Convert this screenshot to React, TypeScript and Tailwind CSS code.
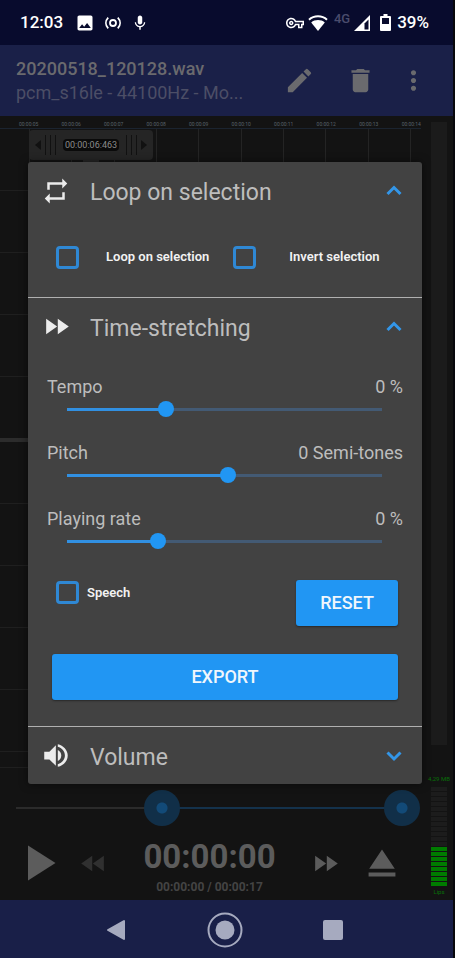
import { useState } from 'react';
import type { ReactNode } from 'react';
import {
  MdDelete,
  MdEdit,
  MdEject,
  MdFastForward,
  MdFastRewind,
  MdImage,
  MdMic,
  MdMoreVert,
  MdOutlineVpnKey,
  MdPlayArrow,
  MdRepeat,
} from 'react-icons/md';

const ticks = ['00:00:05', '00:00:06', '00:00:07', '00:00:08', '00:00:09', '00:00:10', '00:00:11', '00:00:12', '00:00:13', '00:00:14'];

const StatusBar = () => (
  <div className="flex h-[45px] items-center bg-[#080b2d] pl-5 pr-6 text-white">
    <span className="text-[17px] font-medium">12:03</span>
    <MdImage className="ml-3 h-5 w-5" />
    <svg className="ml-2.5 h-4 w-4" viewBox="0 0 16 16" fill="none" stroke="currentColor" strokeWidth="1.8">
      <circle cx="8" cy="8" r="3" />
      <path d="M3.200 2.600C.2 5.800.2 10.200 3.200 13.400M12.800 2.600c3 3.200 3 7.600 0 10.800" />
    </svg>
    <MdMic className="ml-2.5 h-[18px] w-[18px]" />

    <div className="ml-auto flex items-center">
      <MdOutlineVpnKey className="h-[18px] w-[18px]" />
      <svg className="ml-1 h-4 w-5" viewBox="0 0 20 16">
        <path d="M10 16 3.200 7.400C7 4.200 13 4.200 16.800 7.400z" fill="currentColor" />
        <path d="M1 4.700C6 .1 14 .1 19 4.700" fill="none" stroke="currentColor" strokeWidth="2" />
      </svg>
      <span className="ml-1.5 mb-2 text-[13px] font-medium leading-none text-[#4a4c6c]">4G</span>
      <svg className="ml-1 h-4 w-4" viewBox="0 0 16 16">
        <path d="M0 16 16 0v16z" fill="currentColor" />
        <path d="M10.500 8.500 14.500 4.500v10h-4z" fill="#080b2d" />
      </svg>
      <svg className="ml-2.5 h-[17px] w-[11px]" viewBox="0 0 11 17">
        <path d="M3.500 0h4v2H10a1 1 0 0 1 1 1v13a1 1 0 0 1-1 1H1a1 1 0 0 1-1-1V3a1 1 0 0 1 1-1h2.500z" fill="currentColor" />
        <path d="M2 4h7v6H2z" fill="#080b2d" />
      </svg>
      <span className="ml-1.5 text-[17px] font-medium">39%</span>
    </div>
  </div>
);

const TitleBar = () => (
  <header className="flex h-[71px] items-center bg-[#1a2048] pl-4 pr-8 text-[#6a6a6e]">
    <div className="min-w-0 flex-1">
      <h1 className="text-lg font-medium leading-6">20200518_120128.wav</h1>
      <p className="text-lg leading-6 text-[#4c4e66]">pcm_s16le - 44100Hz - Mo...</p>
    </div>
    <div className="flex items-center gap-[30px]">
      <button aria-label="Rename"><MdEdit className="h-[31px] w-[31px]" /></button>
      <button aria-label="Delete"><MdDelete className="h-[31px] w-[31px]" /></button>
      <button aria-label="More" className="-mx-2"><MdMoreVert className="h-[31px] w-[31px]" /></button>
    </div>
  </header>
);

const Grip = () => (
  <div className="flex h-5 gap-1">
    <span className="w-px bg-[#111]" />
    <span className="w-px bg-[#111]" />
    <span className="w-px bg-[#111]" />
  </div>
);

const Waveform = () => (
  <div className="mr-1 flex flex-1 flex-col">
    <div className="flex h-3 items-end justify-between pl-[19px] text-[5px] leading-[7px] text-[#59626a]">
      {ticks.map((tick) => (
        <span key={tick}>{tick}</span>
      ))}
    </div>
    <div className="relative flex flex-1 flex-col border-t border-[#1b2430]">
      {/* vertical second marks */}
      <div className="absolute inset-0 flex justify-between pl-[29px] pr-2.5">
        {ticks.map((tick) => (
          <span key={tick} className="w-px bg-[#242424]" />
        ))}
      </div>
      {[...Array(10)].map((_, i) => (
        <div key={i} className={i === 4 ? 'flex-1 border-b-4 border-[#2c2c2c]' : 'flex-1 border-b border-[#1f1f1f]'} />
      ))}
      {/* playhead handle */}
      <div className="absolute left-[29px] top-px flex flex-col items-center">
        <div className="flex h-[30px] items-center gap-1 rounded-sm bg-[#252525] px-1.5">
          <svg className="h-2.5 w-1.5" viewBox="0 0 6 10"><path d="M6 0v10L0 5z" fill="#111" /></svg>
          <Grip />
          <span className="mx-[3px] rounded-sm bg-[#0a0a0a] px-0.5 text-[9px] leading-3 text-[#8a8a8a]">00:00:06:463</span>
          <Grip />
          <svg className="h-2.5 w-1.5" viewBox="0 0 6 10"><path d="M0 0v10l6-5z" fill="#111" /></svg>
        </div>
        <span className="h-2 w-4 bg-[#252525]" />
      </div>
    </div>
    <div className="h-4 border-b border-[#1f1f1f]" />
  </div>
);

const thumb =
  'appearance-none bg-transparent outline-none [&::-webkit-slider-thumb]:appearance-none [&::-webkit-slider-thumb]:rounded-full';
const seekThumb =
  'pointer-events-none h-9 w-full [grid-area:1/1] [&::-webkit-slider-thumb]:pointer-events-auto [&::-webkit-slider-thumb]:h-9 [&::-webkit-slider-thumb]:w-9 [&::-webkit-slider-thumb]:bg-[radial-gradient(circle,#124a78_5px,#112f48_6px)]';

const SelectionSlider = () => {
  const [start, setStart] = useState(378);
  const [end, setEnd] = useState(1000);

  return (
    <div className="-ml-0.5 mr-[5px] grid items-center">
      <div className="mx-[18px] h-0.5 bg-[#2b2b2b] [grid-area:1/1]">
        <div
          className="h-full bg-[#14324c]"
          style={{ marginLeft: `${start / 10}%`, width: `${(end - start) / 10}%` }}
        />
      </div>
      <input type="range" aria-label="Selection start" min={0} max={1000} value={start} onChange={(e) => setStart(Number(e.target.value))} className={`${thumb} ${seekThumb}`} />
      <input type="range" aria-label="Selection end" min={0} max={1000} value={end} onChange={(e) => setEnd(Number(e.target.value))} className={`${thumb} ${seekThumb}`} />
    </div>
  );
};

const Transport = () => (
  <div className="flex h-[74px] items-center justify-between pl-2 pr-5 text-[#5c5c5c]">
    <div className="flex items-center gap-2.5">
      <button aria-label="Play"><MdPlayArrow className="h-[60px] w-[60px]" /></button>
      <button aria-label="Rewind" className="text-[#303030]"><MdFastRewind className="h-[31px] w-[31px]" /></button>
    </div>
    <div className="pt-3 text-center font-bold">
      <div className="text-[33px] leading-9">00:00:00</div>
      <div className="text-xs leading-6 text-[#444]">00:00:00 / 00:00:17</div>
    </div>
    <div className="flex items-center gap-[18px]">
      <button aria-label="Fast forward"><MdFastForward className="h-[31px] w-[31px]" /></button>
      <button aria-label="Eject"><MdEject className="h-[46px] w-[46px]" /></button>
    </div>
  </div>
);

const Meters = () => (
  <aside className="flex w-7 flex-col items-center pt-1.5 text-[6px] leading-[8px] text-[#087008]">
    <div className="w-4 flex-1 bg-[#1b1b1b]" />
    <span className="mt-[30px] whitespace-nowrap">4,29 MB</span>
    <div className="mt-1 flex w-4 flex-col gap-px">
      {[...Array(20)].map((_, i) => (
        <span key={i} className={i < 12 ? 'h-1 bg-[#1c1c1c]' : 'h-1 bg-[#007c00]'} />
      ))}
    </div>
    <span className="mb-1 mt-0.5">Lips</span>
  </aside>
);

type SectionProps = { icon: ReactNode; title: string; open?: boolean; children?: ReactNode };

const Section = ({ icon, title, open = false, children }: SectionProps) => (
  <section className="border-b border-[#b0b0b0] last:border-b-0">
    <button className="flex h-[57px] w-full items-center px-[13px]">
      <span className="flex w-[49px] text-[#ececec]">{icon}</span>
      <span className="flex-1 pt-1 text-left text-[23px] leading-8 text-[#bdbdbd]">{title}</span>
      <svg className="h-[30px] w-[30px] text-[#3396e8]" viewBox="0 0 30 30" fill="none" stroke="currentColor" strokeWidth="3">
        <path d={open ? 'M8.500 18 15 11.500 21.500 18' : 'M8.500 11.500 15 18 21.500 11.500'} />
      </svg>
    </button>
    {children}
  </section>
);

type CheckProps = { label: string; className: string };

const Check = ({ label, className }: CheckProps) => (
  <label className={`flex items-center text-[13px] font-semibold text-[#f2f2f2] ${className}`}>
    <input type="checkbox" className="h-[23px] w-[23px] appearance-none rounded-sm border-[3px] border-[#2f88d4] checked:bg-[#2f88d4]" />
    {label}
  </label>
);

type SliderProps = { id: string; label: string; unit: string; initial: number };

const Slider = ({ id, label, unit, initial }: SliderProps) => {
  const [position, setPosition] = useState(initial);

  return (
    <div className="h-[66px]">
      <div className="flex justify-between text-lg leading-6 text-[#bdbdbd]">
        <label htmlFor={id}>{label}</label>
        <output htmlFor={id}>{unit}</output>
      </div>
      <div className="ml-3 mr-[13px] grid items-center">
        <div className="mx-2 h-[3px] bg-[#435a74] [grid-area:1/1]">
          <div className="h-full bg-[#3190e2]" style={{ width: `${position / 10}%` }} />
        </div>
        <input
          id={id}
          type="range"
          min={0}
          max={1000}
          value={position}
          onChange={(e) => setPosition(Number(e.target.value))}
          className={`${thumb} h-5 w-full [grid-area:1/1] [&::-webkit-slider-thumb]:h-4 [&::-webkit-slider-thumb]:w-4 [&::-webkit-slider-thumb]:bg-[#2196f3]`}
        />
      </div>
    </div>
  );
};

const VolumeIcon = () => (
  <svg className="h-[31px] w-[31px]" viewBox="0 0 24 24" fill="currentColor">
    <path d="M2.500 9v6h4l5 5V4l-5 5z" />
    <path d="M13 7.800v8.400c1.700-.8 2.700-2.400 2.700-4.200S14.700 8.600 13 7.800z" />
    <path d="M13 3.200v2.100c3.200.9 5.500 3.500 5.500 6.700s-2.300 5.800-5.500 6.700v2.100c4.300-.9 7.700-4.500 7.700-8.800S17.300 4.100 13 3.200z" />
  </svg>
);

const actionButton = 'h-[46px] rounded-[3px] bg-[#2196f3] text-lg font-medium text-[#f0f6fc] shadow-[0_1px_2px_rgba(0,0,0,0.4)]';

const EffectsDialog = () => (
  <div role="dialog" aria-label="Effects" className="absolute left-7 right-[31px] top-[46px] rounded-[3px] bg-[#424242] shadow-[0_0_8px_rgba(0,0,0,0.5)]">
    <Section icon={<MdRepeat className="h-[30px] w-[30px]" />} title="Loop on selection" open>
      <div className="flex h-[78px] items-center gap-6 pb-0.5 pl-7">
        <Check label="Loop on selection" className="gap-[27px]" />
        <Check label="Invert selection" className="gap-[33px]" />
      </div>
    </Section>
    <Section icon={<MdFastForward className="h-[31px] w-[31px]" />} title="Time-stretching" open>
      <div className="px-[19px] pt-5">
        <Slider id="tempo" label="Tempo" unit="0 %" initial={314} />
        <Slider id="pitch" label="Pitch" unit="0 Semi-tones" initial={510} />
        <Slider id="rate" label="Playing rate" unit="0 %" initial={289} />
      </div>
      <div className="flex items-start justify-between pl-7 pr-6 pt-[7px]">
        <Check label="Speech" className="gap-2 pt-px" />
        <button className={`${actionButton} w-[102px]`}>RESET</button>
      </div>
      <div className="px-6 pb-[26px] pt-7">
        <button className={`${actionButton} w-full`}>EXPORT</button>
      </div>
    </Section>
    <Section icon={<VolumeIcon />} title="Volume" />
  </div>
);

const NavigationBar = () => (
  <nav className="flex h-[58px] items-center justify-center gap-[78px] bg-[#191f48] pr-1 pt-0.5 text-[#a6aabf]">
    <button aria-label="Back">
      <svg className="h-6 w-6" viewBox="0 0 24 24" fill="currentColor" stroke="currentColor" strokeWidth="2" strokeLinejoin="round">
        <path d="M19 3v18L3 12z" />
      </svg>
    </button>
    <button aria-label="Home">
      <svg className="h-9 w-9" viewBox="0 0 36 36">
        <circle cx="18" cy="18" r="16.500" fill="none" stroke="currentColor" strokeWidth="2" />
        <circle cx="18" cy="18" r="9.500" fill="currentColor" />
      </svg>
    </button>
    <button aria-label="Recent apps">
      <svg className="h-6 w-6" viewBox="0 0 24 24" fill="currentColor">
        <rect x="2" y="2" width="20" height="20" rx="2" />
      </svg>
    </button>
  </nav>
);

export default function App() {
  return (
    <div className="flex min-h-screen flex-col border-r-2 border-[#08080c] bg-[#131313] font-[Roboto,sans-serif]">
      <StatusBar />
      <TitleBar />
      <main className="relative flex flex-1">
        <div className="flex min-w-0 flex-1 flex-col">
          <Waveform />
          <div className="pt-[22px]">
            <SelectionSlider />
          </div>
          <Transport />
        </div>
        <Meters />
        <EffectsDialog />
      </main>
      <NavigationBar />
    </div>
  );
}
